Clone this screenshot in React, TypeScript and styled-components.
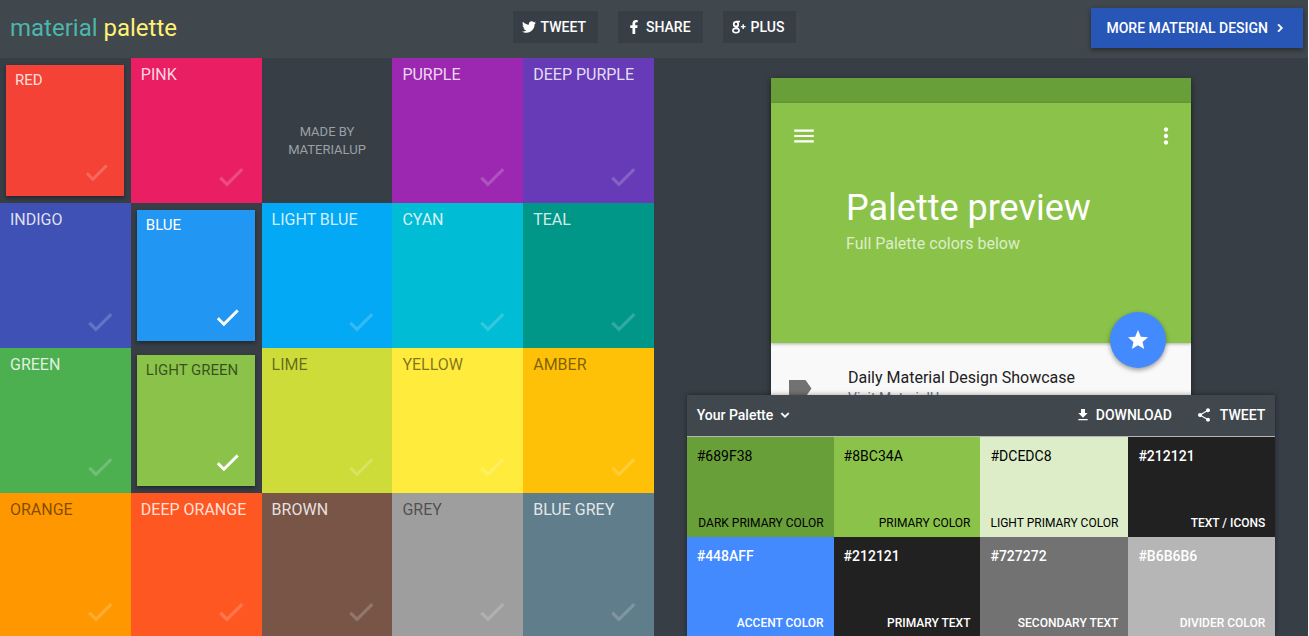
import React from 'react';
import styled, { createGlobalStyle, css } from 'styled-components';
import {
  MdCheck,
  MdMenu,
  MdMoreVert,
  MdStar,
  MdFileDownload,
  MdShare,
  MdKeyboardArrowDown,
  MdKeyboardArrowRight,
} from 'react-icons/md';
import { FaTwitter, FaFacebookF } from 'react-icons/fa';

const GlobalStyle = createGlobalStyle`
  * { box-sizing: border-box; }
  body {
    margin: 0;
    background: #fff;
    font-family: Roboto, "Liberation Sans", sans-serif;
    overflow: hidden;
  }
  button, a { font: inherit; color: inherit; text-decoration: none; }
  button { border: 0; padding: 0; margin: 0; background: none; cursor: pointer; }
  svg { display: block; flex: none; }
  path[fill="none"] { stroke: none; }
  h1, h2, p { margin: 0; font-weight: 400; }
`;

const Page = styled.div`
  height: 100vh;
  display: flex;
  flex-direction: column;
  background: #373e46;
  border-right: 1px solid #fff;
  overflow: hidden;
`;

const Header = styled.header`
  flex: none;
  height: 58px;
  padding: 0 5px 0 10px;
  display: grid;
  grid-template-columns: 1fr auto 1fr;
  align-items: center;
  background: #40474d;
`;

const Logo = styled.a`
  justify-self: start;
  font-size: 24px;
  line-height: 28px;
  padding-bottom: 2px;
  color: #4db6ac;
`;

const LogoAccent = styled.span`
  color: #fff176;
`;

const ShareBar = styled.nav`
  display: flex;
  gap: 20px;
  padding: 0 4px 4px 0;
`;

const ShareButton = styled.button`
  height: 32px;
  padding: 0 12px 0 9px;
  display: flex;
  align-items: center;
  gap: 5px;
  background: #373e46;
  color: #fff;
  font-size: 14px;
  font-weight: 500;
`;

const MoreLink = styled.a`
  justify-self: end;
  height: 40px;
  margin-bottom: 2px;
  padding: 0 15px;
  display: flex;
  align-items: center;
  gap: 4px;
  background: #2856b6;
  box-shadow: 0 2px 5px rgba(0, 0, 0, 0.4);
  color: #fff;
  font-size: 14px;
  font-weight: 500;

  svg {
    stroke-width: 1;
  }
`;

const Main = styled.main`
  flex: 1;
  min-height: 0;
  display: grid;
  grid-template-columns: 1fr 1fr;
`;

const Swatches = styled.section`
  display: grid;
  grid-template-columns: repeat(5, 1fr);
  grid-auto-rows: 145px;
`;

type Tone = 'light' | 'dark';

const Swatch = styled.button<{ $color: string; $tone: Tone; $inset?: boolean; $active?: boolean }>`
  padding: 7px 15px 10px 10px;
  display: flex;
  flex-direction: column;
  justify-content: space-between;
  text-align: left;
  background: ${(p) => p.$color};
  color: ${(p) => (p.$tone === 'light' ? 'rgba(255, 255, 255, 0.84)' : 'rgba(0, 0, 0, 0.52)')};
  font-size: 16px;
  line-height: 20px;

  svg {
    align-self: flex-end;
    width: 32px;
    height: 32px;
    color: #fff;
    stroke-width: 0.5;
    opacity: ${(p) => (p.$active ? 1 : 0.2)};
  }

  ${(p) =>
    p.$inset &&
    css`
      margin: 7px 7px 7px 6px;
      padding: 5px 13px 9px 9px;
      font-size: 15px;
      box-shadow: 0 2px 4px rgba(0, 0, 0, 0.4);
      svg {
        width: 29px;
        height: 29px;
      }
    `}

  ${(p) =>
    p.$active &&
    css`
      color: ${p.$tone === 'light' ? '#fff' : 'rgba(0, 0, 0, 0.6)'};
    `}
`;

const MadeBy = styled.a`
  display: flex;
  align-items: center;
  justify-content: center;
  padding-top: 20px;
  text-align: center;
  color: #9ba0a4;
  font-size: 13px;
  line-height: 18px;
`;

const Preview = styled.section`
  position: relative;
  padding-top: 20px;
  overflow: hidden;
`;

const Phone = styled.article`
  width: 420px;
  margin: 0 auto;
  background: #f9f9f9;
  box-shadow: 0 2px 6px rgba(0, 0, 0, 0.5);
`;

const StatusBar = styled.div`
  height: 25px;
  background: #689f38;
`;

const Hero = styled.header`
  position: relative;
  height: 240px;
  padding: 20px 12px 0 20px;
  background: #8bc34a;
  box-shadow: 0 1px 3px rgba(0, 0, 0, 0.3);
  color: #fff;
`;

const HeroBar = styled.div`
  display: flex;
  justify-content: space-between;
`;

const HeroText = styled.div`
  padding: 37px 0 0 55px;
`;

const HeroTitle = styled.h1`
  font-size: 36px;
  line-height: 44px;
`;

const HeroSubtitle = styled.p`
  font-size: 16px;
  line-height: 28px;
  color: #dcedc8;
`;

const Fab = styled.button`
  position: absolute;
  right: 25px;
  bottom: -25px;
  width: 56px;
  height: 56px;
  display: flex;
  align-items: center;
  justify-content: center;
  border-radius: 50%;
  background: #448aff;
  box-shadow: 0 2px 5px rgba(0, 0, 0, 0.4);
  color: #fff;
`;

const ListRow = styled.div`
  display: flex;
  gap: 36px;
  padding: 25px 18px;
  color: #727272;

  svg {
    margin-top: 12px;
  }
`;

const RowTitle = styled.p`
  font-size: 16px;
  line-height: 20px;
  color: #212121;
`;

const RowLink = styled.a`
  font-size: 14px;
  line-height: 18px;
`;

const Palette = styled.section`
  position: absolute;
  left: 5%;
  right: 5%;
  bottom: 1px;
  box-shadow: 0 0 5px rgba(0, 0, 0, 0.4);
`;

const PaletteBar = styled.div`
  height: 42px;
  padding: 0 10px 2px;
  display: flex;
  align-items: center;
  gap: 24px;
  background: #40474d;
  border-bottom: 1px solid #b6b6b6;
  color: #fff;
  font-size: 14px;
  font-weight: 500;
`;

const PaletteMenu = styled.button`
  margin-right: auto;
  display: flex;
  align-items: center;
  gap: 4px;

  svg {
    stroke-width: 1;
  }
`;

const PaletteAction = styled.button<{ $gap: number }>`
  display: flex;
  align-items: center;
  gap: ${(p) => p.$gap}px;
`;

const PaletteGrid = styled.div`
  display: grid;
  grid-template-columns: repeat(4, 1fr);
  grid-auto-rows: 100px;
`;

const PaletteCell = styled.div<{ $color: string; $tone: Tone }>`
  padding: 9px 10px 6px;
  display: flex;
  flex-direction: column;
  justify-content: space-between;
  background: ${(p) => p.$color};
  color: ${(p) => (p.$tone === 'light' ? '#fff' : '#000')};
  font-weight: ${(p) => (p.$tone === 'light' ? 500 : 400)};
`;

const Hex = styled.span`
  font-size: 14px;
  line-height: 20px;
`;

const Role = styled.span`
  align-self: flex-end;
  font-size: 12px;
  line-height: 16px;
  white-space: nowrap;
`;

const GooglePlusIcon = () => (
  <svg width="14" height="14" viewBox="0 0 14 14" fill="none" stroke="currentColor" aria-hidden="true">
    <ellipse cx="4" cy="4.2" rx="2.2" ry="2.3" strokeWidth="1.8" />
    <ellipse cx="4" cy="10.6" rx="3.1" ry="2.2" strokeWidth="1.6" />
    <path d="M4 1.6H8M3.6 6.6C3.6 7.6 5 7.6 6.2 8.8" strokeWidth="1.5" />
    <path d="M11.2 4.2V9M8.8 6.6H13.6" strokeWidth="1.4" />
  </svg>
);

const LabelIcon = () => (
  <svg width="23" height="17" viewBox="0 0 23 17" fill="currentColor" aria-hidden="true">
    <path d="M0 0H16.5L22.5 8.5L16.5 17H0Z" />
  </svg>
);

interface SwatchItem {
  name: string;
  color: string;
  tone: Tone;
  inset?: boolean;
  active?: boolean;
}

const firstSwatches: SwatchItem[] = [
  { name: 'RED', color: '#f44336', tone: 'light', inset: true },
  { name: 'PINK', color: '#e91e63', tone: 'light' },
];

const otherSwatches: SwatchItem[] = [
  { name: 'PURPLE', color: '#9c27b0', tone: 'light' },
  { name: 'DEEP PURPLE', color: '#673ab7', tone: 'light' },
  { name: 'INDIGO', color: '#3f51b5', tone: 'light' },
  { name: 'BLUE', color: '#2196f3', tone: 'light', inset: true, active: true },
  { name: 'LIGHT BLUE', color: '#03a9f4', tone: 'light' },
  { name: 'CYAN', color: '#00bcd4', tone: 'light' },
  { name: 'TEAL', color: '#009688', tone: 'light' },
  { name: 'GREEN', color: '#4caf50', tone: 'light' },
  { name: 'LIGHT GREEN', color: '#8bc34a', tone: 'dark', inset: true, active: true },
  { name: 'LIME', color: '#cddc39', tone: 'dark' },
  { name: 'YELLOW', color: '#ffeb3b', tone: 'dark' },
  { name: 'AMBER', color: '#ffc107', tone: 'dark' },
  { name: 'ORANGE', color: '#ff9800', tone: 'dark' },
  { name: 'DEEP ORANGE', color: '#ff5722', tone: 'light' },
  { name: 'BROWN', color: '#795548', tone: 'light' },
  { name: 'GREY', color: '#9e9e9e', tone: 'dark' },
  { name: 'BLUE GREY', color: '#607d8b', tone: 'light' },
];

const paletteCells: { hex: string; role: string; tone: Tone }[] = [
  { hex: '#689F38', role: 'DARK PRIMARY COLOR', tone: 'dark' },
  { hex: '#8BC34A', role: 'PRIMARY COLOR', tone: 'dark' },
  { hex: '#DCEDC8', role: 'LIGHT PRIMARY COLOR', tone: 'dark' },
  { hex: '#212121', role: 'TEXT / ICONS', tone: 'light' },
  { hex: '#448AFF', role: 'ACCENT COLOR', tone: 'light' },
  { hex: '#212121', role: 'PRIMARY TEXT', tone: 'light' },
  { hex: '#727272', role: 'SECONDARY TEXT', tone: 'light' },
  { hex: '#B6B6B6', role: 'DIVIDER COLOR', tone: 'light' },
];

const renderSwatch = (s: SwatchItem) => (
  <Swatch key={s.name} $color={s.color} $tone={s.tone} $inset={s.inset} $active={s.active} aria-pressed={!!s.active}>
    <span>{s.name}</span>
    <MdCheck />
  </Swatch>
);

export default function App() {
  return (
    <>
      <GlobalStyle />
      <Page>
        <Header>
          <Logo href="#">
            material <LogoAccent>palette</LogoAccent>
          </Logo>
          <ShareBar>
            <ShareButton>
              <FaTwitter size={14} />
              TWEET
            </ShareButton>
            <ShareButton>
              <FaFacebookF size={14} />
              SHARE
            </ShareButton>
            <ShareButton>
              <GooglePlusIcon />
              PLUS
            </ShareButton>
          </ShareBar>
          <MoreLink href="#more">
            MORE MATERIAL DESIGN
            <MdKeyboardArrowRight size={16} />
          </MoreLink>
        </Header>
        <Main>
          <Swatches aria-label="Colors">
            {firstSwatches.map(renderSwatch)}
            <MadeBy href="#materialup">
              MADE BY
              <br />
              MATERIALUP
            </MadeBy>
            {otherSwatches.map(renderSwatch)}
          </Swatches>
          <Preview>
            <Phone>
              <StatusBar />
              <Hero>
                <HeroBar>
                  <button aria-label="Menu">
                    <MdMenu size={26} />
                  </button>
                  <button aria-label="More options">
                    <MdMoreVert size={26} />
                  </button>
                </HeroBar>
                <HeroText>
                  <HeroTitle>Palette preview</HeroTitle>
                  <HeroSubtitle>Full Palette colors below</HeroSubtitle>
                </HeroText>
                <Fab aria-label="Favorite">
                  <MdStar size={24} />
                </Fab>
              </Hero>
              <ListRow>
                <LabelIcon />
                <div>
                  <RowTitle>Daily Material Design Showcase</RowTitle>
                  <RowLink href="#visit">Visit MaterialUp</RowLink>
                </div>
              </ListRow>
            </Phone>
            <Palette aria-label="Your palette">
              <PaletteBar>
                <PaletteMenu>
                  Your Palette
                  <MdKeyboardArrowDown size={16} />
                </PaletteMenu>
                <PaletteAction $gap={5}>
                  <MdFileDownload size={16} />
                  DOWNLOAD
                </PaletteAction>
                <PaletteAction $gap={8}>
                  <MdShare size={16} />
                  TWEET
                </PaletteAction>
              </PaletteBar>
              <PaletteGrid>
                {paletteCells.map((c) => (
                  <PaletteCell key={c.role} $color={c.hex} $tone={c.tone}>
                    <Hex>{c.hex}</Hex>
                    <Role>{c.role}</Role>
                  </PaletteCell>
                ))}
              </PaletteGrid>
            </Palette>
          </Preview>
        </Main>
      </Page>
    </>
  );
}
